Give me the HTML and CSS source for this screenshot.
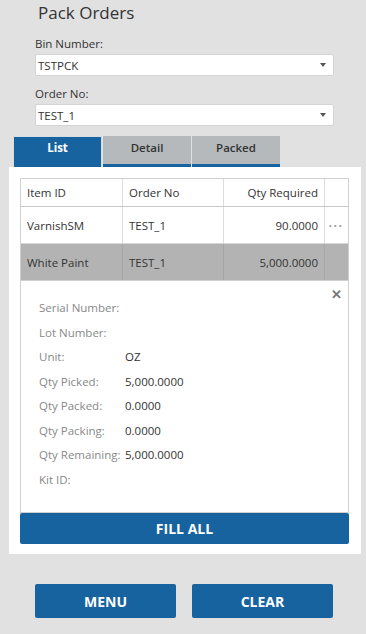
FILE: index.html
```html
<!DOCTYPE html>
<html lang="en">
<head>
    <meta charset="UTF-8">
    <meta name="viewport" content="width=device-width, initial-scale=1.0">
    <title>Pack Orders</title>
    <link rel="stylesheet" href="styles.css">
</head>
<body>

<h1 class="title">Pack Orders</h1>

<div class="field">
    <label>Bin Number:</label>
    <div class="select"><span>TSTPCK</span><span class="caret"></span></div>
</div>

<div class="field">
    <label>Order No:</label>
    <div class="select"><span>TEST_1</span><span class="caret"></span></div>
</div>

<div class="tabs">
    <div class="tab active">List</div>
    <div class="tab">Detail</div>
    <div class="tab">Packed</div>
</div>

<div class="panel">
    <div class="grid">
        <div class="row head">
            <div class="cell">Item ID</div>
            <div class="cell">Order No</div>
            <div class="cell num">Qty Required</div>
            <div class="cell more"></div>
        </div>
        <div class="row">
            <div class="cell">VarnishSM</div>
            <div class="cell">TEST_1</div>
            <div class="cell num">90.0000</div>
            <div class="cell more">&middot;&middot;&middot;</div>
        </div>
        <div class="row selected">
            <div class="cell">White Paint</div>
            <div class="cell">TEST_1</div>
            <div class="cell num">5,000.0000</div>
            <div class="cell more"></div>
        </div>

        <div class="details">
            <div class="close">&#x2715;</div>
            <div class="line"><span class="key">Serial Number:</span><span class="val"></span></div>
            <div class="line"><span class="key">Lot Number:</span><span class="val"></span></div>
            <div class="line"><span class="key">Unit:</span><span class="val">OZ</span></div>
            <div class="line"><span class="key">Qty Picked:</span><span class="val">5,000.0000</span></div>
            <div class="line"><span class="key">Qty Packed:</span><span class="val">0.0000</span></div>
            <div class="line"><span class="key">Qty Packing:</span><span class="val">0.0000</span></div>
            <div class="line"><span class="key">Qty Remaining:</span><span class="val">5,000.0000</span></div>
            <div class="line"><span class="key">Kit ID:</span><span class="val"></span></div>
        </div>
    </div>
    <button class="btn fill">FILL ALL</button>
</div>

<div class="actions">
    <button class="btn">MENU</button>
    <button class="btn">CLEAR</button>
</div>

</body>
</html>
```

FILE: styles.css
```css
body {
    font-family: "Open Sans", "Noto Sans", sans-serif;
    margin: 0;
    padding: 0;
    background-color: #e1e1e1;
    color: #333;
    font-size: 12px;
}

.title {
    font-size: 17px;
    font-weight: normal;
    margin: 0;
    padding: 1px 0 0 38px;
    height: 33px;
    line-height: 24px;
    color: #333;
}

.field {
    margin-left: 35px;
    width: 299px;
    height: 50px;
}

.field label {
    display: block;
    height: 20px;
    line-height: 20px;
    font-size: 11.5px;
}

.select {
    display: flex;
    justify-content: space-between;
    align-items: center;
    height: 22px;
    background: white;
    padding: 0 7px 0 2px;
    box-sizing: border-box;
    border: 1px solid #d4d4d4;
    border-radius: 2px;
    font-size: 11.5px;
}

.caret {
    width: 0;
    height: 0;
    border-left: 3.5px solid transparent;
    border-right: 3.5px solid transparent;
    border-top: 4px solid #555;
}

.tabs {
    display: flex;
    margin: 2px 0 0 13px;
    height: 31px;
}

.tab {
    width: 88px;
    box-sizing: border-box;
    margin-right: 1px;
    background: #b5b9bc;
    border-bottom: 3px solid #1763a0;
    text-align: center;
    line-height: 24px;
    font-size: 11.5px;
    font-weight: 600;
    color: #333;
}

.tab.active {
    width: 89px;
    background: #1763a0;
    border: 1px solid #d8dde2;
    border-bottom: none;
    color: white;
    font-weight: bold;
    line-height: 22px;
}

.panel {
    margin: 0 5px 0 9px;
    background: white;
    padding: 11px 12px 10px 11px;
}

.grid {
    border: 1px solid #d0d0d0;
}

.row {
    display: flex;
    height: 36px;
    align-items: center;
    border-bottom: 1px solid #d6d6d6;
    font-size: 11.5px;
}

.row.head {
    height: 27px;
    border-bottom: 1px solid #c8c8c8;
}

.row.selected {
    background: #b3b3b3;
    border-bottom: none;
}

.cell {
    height: 100%;
    display: flex;
    align-items: center;
    box-sizing: border-box;
    padding: 0 6px;
    border-right: 1px solid #dcdcdc;
}

.cell:nth-child(1) { width: 102px; }
.cell:nth-child(2) { width: 101px; }
.cell:nth-child(3) { width: 101px; }

.cell.num {
    justify-content: flex-end;
}

.cell.more {
    flex: 1;
    border-right: none;
    padding: 0 0 0 3px;
    color: #999;
    font-size: 17px;
    letter-spacing: 0.5px;
}

.row.selected .cell {
    border-right-color: #a6a6a6;
}

.details {
    position: relative;
    height: 232px;
    border-top: 1px solid #d0d0d0;
    padding: 19px 0 0 18px;
    box-sizing: border-box;
}

.close {
    position: absolute;
    top: 4px;
    right: 6px;
    font-size: 13px;
    font-weight: bold;
    color: #777;
}

.line {
    display: flex;
    height: 24.5px;
    font-size: 11.5px;
}

.key {
    width: 86px;
    color: #888;
}

.val {
    color: #333;
}

.btn {
    display: block;
    background-color: #1763a0;
    color: white;
    border: none;
    border-radius: 2px;
    font-family: "Open Sans", "Noto Sans", sans-serif;
    font-weight: bold;
    font-size: 14px;
    cursor: pointer;
}

.btn.fill {
    width: 329px;
    height: 31px;
}

.actions {
    display: flex;
    gap: 16px;
    margin: 30px 0 0 35px;
}

.actions .btn {
    width: 141px;
    height: 34px;
}
```
